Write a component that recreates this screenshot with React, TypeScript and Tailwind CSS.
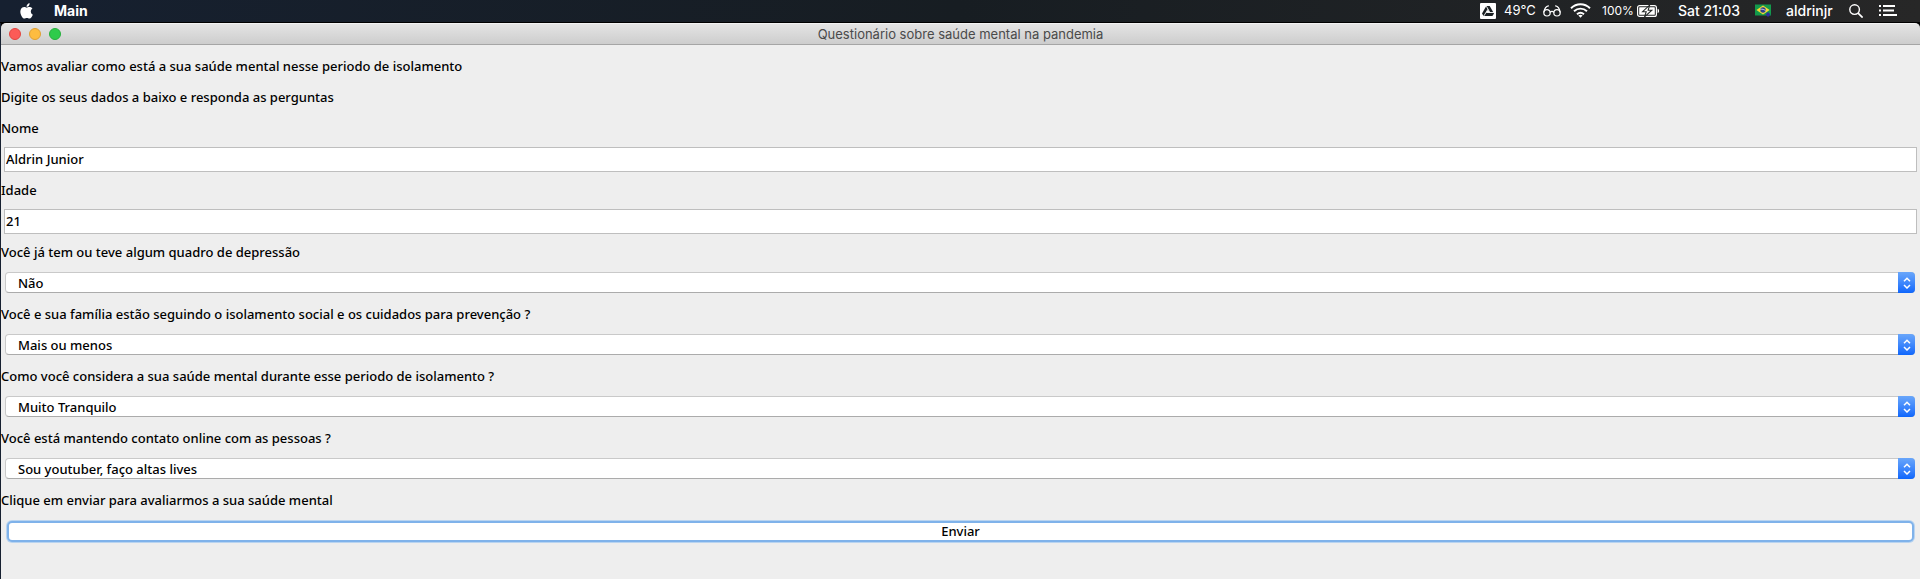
import { useId } from "react";
import type { ReactNode } from "react";

function AppleLogo() {
  return (
    <svg viewBox="0 0 24 24" className="h-[18px] w-[18px]" fill="currentColor" aria-hidden="true">
      <path d="M17.05 12.54c-.03-2.6 2.12-3.85 2.22-3.91-1.21-1.77-3.09-2.01-3.76-2.04-1.6-.16-3.12.94-3.93.94-.81 0-2.06-.92-3.39-.89-1.74.03-3.35 1.01-4.25 2.57-1.81 3.14-.46 7.8 1.3 10.35.86 1.25 1.89 2.65 3.24 2.6 1.3-.05 1.79-.84 3.36-.84s2.01.84 3.39.81c1.4-.02 2.28-1.27 3.14-2.52.99-1.45 1.39-2.85 1.42-2.92-.03-.01-2.72-1.04-2.74-4.15zM14.47 4.9c.72-.87 1.2-2.08 1.07-3.28-1.03.04-2.28.69-3.02 1.55-.66.77-1.24 2-1.09 3.18 1.15.09 2.32-.58 3.04-1.45z" />
    </svg>
  );
}

function DriveIcon() {
  return (
    <svg viewBox="0 0 16 16" className="h-4 w-4" aria-hidden="true">
      <rect width="16" height="16" rx="1" fill="#fff" />
      <path d="M6.3 3h3.4L14 10.4 12.4 13H3.6L2 10.4z" fill="#1b2124" />
      <path d="M8 6.4 9.7 9.4H6.3z" fill="#fff" />
      <path d="M6.3 3.2l3.6 6.3H14M7.9 6.3 3.9 12.9M6.2 9.5h4" stroke="#fff" strokeWidth="0.9" fill="none" />
    </svg>
  );
}

function GlassesIcon() {
  return (
    <svg viewBox="0 0 18 12" className="h-3 w-[18px]" fill="none" stroke="currentColor" strokeWidth="1.2" strokeLinecap="round" aria-hidden="true">
      <circle cx="4" cy="7.8" r="3.2" />
      <circle cx="14" cy="7.8" r="3.2" />
      <path d="M7.2 7.2c.9-1 2.7-1 3.6 0M.9 7C1.4 4.2 3 1.4 5.4.9M17.1 7c-.5-2.8-2.1-5.6-4.5-6.1" />
    </svg>
  );
}

function WifiIcon() {
  return (
    <svg viewBox="0 0 21 15" className="h-[15px] w-[21px]" fill="none" stroke="currentColor" strokeWidth="1.9" aria-hidden="true">
      <path d="M1 5.2c5.4-5.3 13.6-5.3 19 0M4 8.3c3.8-3.6 9.2-3.6 13 0M7 11.3c2.1-1.9 4.9-1.9 7 0" />
      <path d="M8.4 12.6c1.2-1 3-1 4.2 0l-2.1 2.2z" fill="currentColor" stroke="none" />
    </svg>
  );
}

function BatteryIcon() {
  return (
    <svg viewBox="0 0 23 12" className="h-3 w-[23px]" aria-hidden="true">
      <rect x="0.6" y="0.6" width="18.8" height="10.8" rx="2" fill="none" stroke="#fff" strokeWidth="1.2" />
      <rect x="2.2" y="2.2" width="15.6" height="7.6" rx="0.6" fill="#fff" />
      <path d="M20.6 3.8c2 .6 2 3.8 0 4.4z" fill="#fff" />
      <path d="M12.6.2 5.6 6.7h3.6L7.6 11.8 14.8 5.2h-3.6z" fill="#fff" stroke="#232727" strokeWidth="1.1" />
    </svg>
  );
}

function BrazilFlag() {
  return (
    <svg viewBox="0 0 16 13" className="h-[13px] w-4" aria-hidden="true">
      <rect y="0.5" width="16" height="11" fill="#139a4b" />
      <path d="M8 1.6 14.6 6 8 10.4 1.4 6z" fill="#f6d736" />
      <circle cx="8" cy="6" r="2.7" fill="#2b3f8c" />
      <path d="M5.4 5.3c2-.4 3.9.2 5.2 1.5" stroke="#fff" strokeWidth="0.7" fill="none" />
      <path d="M13 8l2.5 2.5L13 13l-2.5-2.5z" fill="#2f2c9c" />
    </svg>
  );
}

function SearchIcon() {
  return (
    <svg viewBox="0 0 14 14" className="h-[14px] w-[14px]" fill="none" stroke="currentColor" strokeWidth="1.4" aria-hidden="true">
      <circle cx="5.6" cy="5.6" r="4.8" />
      <path d="M9.1 9.1l4.5 4.5" strokeWidth="1.7" />
    </svg>
  );
}

function ListIcon() {
  return (
    <svg viewBox="0 0 18 11" className="h-[11px] w-[18px]" fill="currentColor" aria-hidden="true">
      <path d="M0 0h2v2H0zM4 0h12v2H4zM0 4.5h2v2H0zM4 4.5h11v2H4zM0 9h2v2H0zM4 9h14v2H4z" />
    </svg>
  );
}

function MenuBar() {
  return (
    <header className="flex h-[23px] items-center justify-between border-b border-black bg-linear-to-r from-[#162030] via-[#171d22] to-[#272727] pr-[23px] pb-px pl-[18px] font-[Inter,sans-serif] text-[14px] leading-none text-white">
      <nav className="flex items-center gap-[18px]">
        <AppleLogo />
        <span className="font-bold">Main</span>
      </nav>
      <div className="flex items-center">
        <DriveIcon />
        <span className="ml-2 w-[39px] text-[13px]">49°C</span>
        <GlassesIcon />
        <span className="ml-[9px]">
          <WifiIcon />
        </span>
        <span className="ml-[11px] w-[35px] text-[12px]">100%</span>
        <BatteryIcon />
        <span className="ml-[18px] w-[77px] font-medium whitespace-nowrap">Sat 21:03</span>
        <BrazilFlag />
        <span className="ml-[15px] w-[63px] font-medium">aldrinjr</span>
        <SearchIcon />
        <span className="ml-4">
          <ListIcon />
        </span>
      </div>
    </header>
  );
}

function TitleBar() {
  return (
    <div className="grid h-[22px] grid-cols-[1fr_auto_1fr] items-center rounded-t-[5px] border-t border-b border-t-[#f2f2f2] border-b-[#a5a5a5] bg-linear-to-b from-[#e4e4e4] to-[#cdcdcd]">
      <div className="flex gap-2 pl-2">
        <button type="button" aria-label="Fechar" className="h-3 w-3 rounded-full border border-[#e2443f] bg-[#fc5b57]" />
        <button type="button" aria-label="Minimizar" className="h-3 w-3 rounded-full border border-[#e0a033] bg-[#fdbc40]" />
        <button type="button" aria-label="Maximizar" className="h-3 w-3 rounded-full border border-[#25b03c] bg-[#2fcb4b]" />
      </div>
      <h1 className="font-[Inter,sans-serif] text-[13px] leading-none text-[#4a4a4a]">
        Questionário sobre saúde mental na pandemia
      </h1>
    </div>
  );
}

function Row({ children }: { children: ReactNode }) {
  return <div className="flex h-[31px] items-center">{children}</div>;
}

function TextField({ label, value }: { label: string; value: string }) {
  const id = useId();
  return (
    <>
      <Row>
        <label htmlFor={id}>{label}</label>
      </Row>
      <Row>
        <input
          id={id}
          type="text"
          defaultValue={value}
          className="mx-[3px] h-[25px] w-full border border-[#bebebe] bg-white px-px pb-px outline-none"
        />
      </Row>
    </>
  );
}

function SelectField({ label, value }: { label: string; value: string }) {
  const id = useId();
  return (
    <>
      <Row>
        <label htmlFor={id}>{label}</label>
      </Row>
      <Row>
        <div className="relative mr-[5px] mb-0.5 ml-1 flex h-[21px] w-full">
          <select
            id={id}
            defaultValue={value}
            className="h-full w-full appearance-none rounded-[4px] border border-[#c9c9c9] border-b-[#ababab] bg-white pl-3 leading-[18px] outline-none"
          >
            <option>{value}</option>
          </select>
          <span className="pointer-events-none absolute inset-y-0 right-0 flex w-[17px] items-center justify-center rounded-r-[4px] bg-linear-to-b from-[#69a6fa] to-[#0c66fc] text-white">
            <svg viewBox="0 0 8 12" className="h-3 w-2" fill="none" stroke="currentColor" strokeWidth="1.5" aria-hidden="true">
              <path d="M1 4.2 4 1.2l3 3M1 8l3 3 3-3" />
            </svg>
          </span>
        </div>
      </Row>
    </>
  );
}

const questions = [
  { label: "Você já tem ou teve algum quadro de depressão", value: "Não" },
  { label: "Você e sua família estão seguindo o isolamento social e os cuidados para prevenção ?", value: "Mais ou menos" },
  { label: "Como você considera a sua saúde mental durante esse periodo de isolamento ?", value: "Muito Tranquilo" },
  { label: "Você está mantendo contato online com as pessoas ?", value: "Sou youtuber, faço altas lives" },
];

export default function App() {
  return (
    <div className="flex min-h-screen flex-col bg-[#162030]">
      <MenuBar />
      <main className="ml-px flex grow flex-col">
        <div className="bg-black">
          <TitleBar />
        </div>
        <form
          className="grow bg-[#eeeeee] pt-[6px] font-['Noto_Sans',sans-serif] text-[13px] font-medium text-black"
          onSubmit={(event) => event.preventDefault()}
        >
          <Row>
            <p>Vamos avaliar como está a sua saúde mental nesse periodo de isolamento</p>
          </Row>
          <Row>
            <p>Digite os seus dados a baixo e responda as perguntas</p>
          </Row>
          <TextField label="Nome" value="Aldrin Junior" />
          <TextField label="Idade" value="21" />
          {questions.map((question) => (
            <SelectField key={question.label} label={question.label} value={question.value} />
          ))}
          <Row>
            <p>Clique em enviar para avaliarmos a sua saúde mental</p>
          </Row>
          <Row>
            <button
              type="submit"
              className="mr-[6px] ml-[6px] flex h-[21px] w-full items-center justify-center rounded-[5px] border-2 border-[#7fb2ea] bg-white leading-none ring-1 ring-[#b9d4f0]"
            >
              Enviar
            </button>
          </Row>
        </form>
      </main>
    </div>
  );
}
